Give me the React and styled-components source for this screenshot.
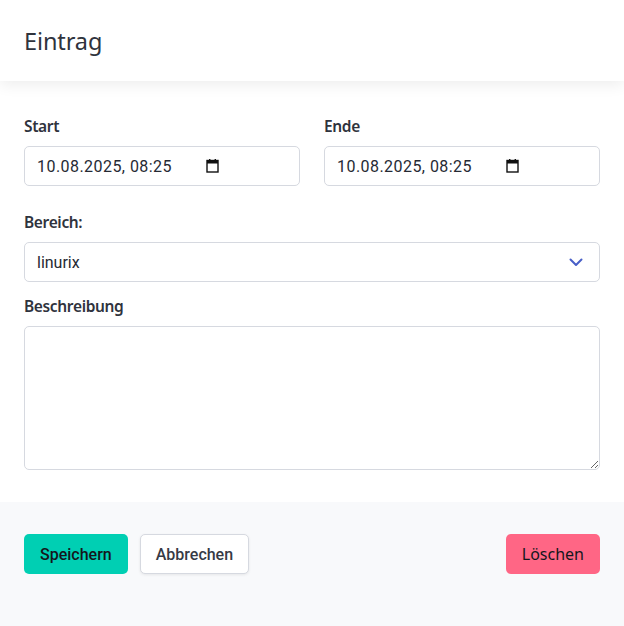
import React from 'react';
import styled, { createGlobalStyle } from 'styled-components';

const GlobalStyle = createGlobalStyle`
  html, body {
    margin: 0;
    padding: 0;
    background: #ffffff;
  }
  body {
    font-family: 'Noto Sans', 'Open Sans', sans-serif;
    color: #363a45;
  }
  * {
    box-sizing: border-box;
  }
`;

const Card = styled.div`
  display: flex;
  flex-direction: column;
  width: 624px;
  min-height: 626px;
`;

const Head = styled.header`
  height: 81px;
  display: flex;
  align-items: center;
  padding: 0 24px;
  background: #fff;
  box-shadow: 0 4px 14px rgba(10, 10, 10, 0.07);
  position: relative;
  z-index: 1;
`;

const Title = styled.h1`
  margin: 0;
  font-size: 23.5px;
  font-weight: 400;
  color: #2f333d;
  letter-spacing: -0.1px;
`;

const Body = styled.section`
  padding: 33px 24px 32px;
  background: #fff;
`;

const Row = styled.div`
  display: grid;
  grid-template-columns: 1fr 1fr;
  gap: 24px;
  margin-bottom: ${(p) => p.$mb || 24}px;
`;

const Field = styled.div`
  margin-bottom: ${(p) => p.$mb || 0}px;
`;

const Label = styled.label`
  display: block;
  font-size: 15.5px;
  font-weight: 600;
  line-height: 24px;
  margin-bottom: 8px;
  color: #2f333d;
  letter-spacing: -0.35px;
`;

const InputBox = styled.div`
  height: 40px;
  display: flex;
  align-items: center;
  justify-content: ${(p) => (p.$spread ? 'space-between' : 'flex-start')};
  gap: 34px;
  padding: 0 16px 0 12px;
  border: 1px solid #d6d9e0;
  border-radius: 5px;
  background: #fff;
  font-family: Roboto, 'Liberation Sans', sans-serif;
  font-size: 16px;
  color: #262a33;
`;

const Value = styled.span`
  white-space: nowrap;
  letter-spacing: ${(p) => (p.$wide ? '0.45px' : '0')};
`;

const Textarea = styled.textarea`
  display: block;
  width: 100%;
  height: 144px;
  border: 1px solid #d6d9e0;
  border-radius: 5px;
  padding: 10px 12px;
  font-family: Roboto, 'Liberation Sans', sans-serif;
  font-size: 16px;
  resize: vertical;
  outline: none;
`;

const Foot = styled.footer`
  flex: 1;
  display: flex;
  align-items: flex-start;
  gap: 12px;
  padding: 32px 24px;
  background: #f8f9fb;
`;

const Button = styled.button`
  height: 40px;
  padding: 0 15px;
  border-radius: 5px;
  border: 1px solid ${(p) => (p.$variant === 'light' ? '#d6d9e0' : 'transparent')};
  background: ${(p) =>
    p.$variant === 'primary' ? '#00cfb3' : p.$variant === 'danger' ? '#ff6685' : '#fff'};
  color: ${(p) => (p.$variant === 'light' ? '#363a45' : '#14161c')};
  font-family: ${(p) =>
    p.$variant === 'danger' ? "'Noto Sans', sans-serif" : "Roboto, 'Liberation Sans', sans-serif"};
  font-size: 16px;
  font-weight: ${(p) => (p.$variant === 'danger' ? 400 : 500)};
  box-shadow: ${(p) => (p.$variant === 'light' ? '0 1px 3px rgba(10,10,10,0.08)' : 'none')};
  margin-left: ${(p) => (p.$push ? 'auto' : '0')};
  cursor: pointer;
`;

function CalendarIcon() {
  return (
    <svg width="13" height="14" viewBox="0 0 13 14">
      <rect x="1" y="1.5" width="11" height="11.5" fill="none" stroke="#111" strokeWidth="1.4" />
      <rect x="1" y="1.5" width="11" height="3" fill="#111" />
      <rect x="3" y="0" width="1.4" height="2.5" fill="#111" />
      <rect x="8.6" y="0" width="1.4" height="2.5" fill="#111" />
    </svg>
  );
}

function Chevron() {
  return (
    <svg width="14" height="9" viewBox="0 0 14 9">
      <path d="M1.5 1.5 L7 7 L12.5 1.5" fill="none" stroke="#485fc7" strokeWidth="2" strokeLinecap="round" strokeLinejoin="round" />
    </svg>
  );
}

function DateInput({ value }) {
  return (
    <InputBox>
      <Value $wide>{value}</Value>
      <CalendarIcon />
    </InputBox>
  );
}

export default function App() {
  return (
    <>
      <GlobalStyle />
      <Card>
        <Head>
          <Title>Eintrag</Title>
        </Head>
        <Body>
          <Row>
            <div>
              <Label>Start</Label>
              <DateInput value="10.08.2025, 08:25" />
            </div>
            <div>
              <Label>Ende</Label>
              <DateInput value="10.08.2025, 08:25" />
            </div>
          </Row>
          <Field $mb={12}>
            <Label>Bereich:</Label>
            <InputBox $spread>
              <Value>linurix</Value>
              <Chevron />
            </InputBox>
          </Field>
          <Field>
            <Label>Beschreibung</Label>
            <Textarea />
          </Field>
        </Body>
        <Foot>
          <Button $variant="primary">Speichern</Button>
          <Button $variant="light">Abbrechen</Button>
          <Button $variant="danger" $push>Löschen</Button>
        </Foot>
      </Card>
    </>
  );
}
